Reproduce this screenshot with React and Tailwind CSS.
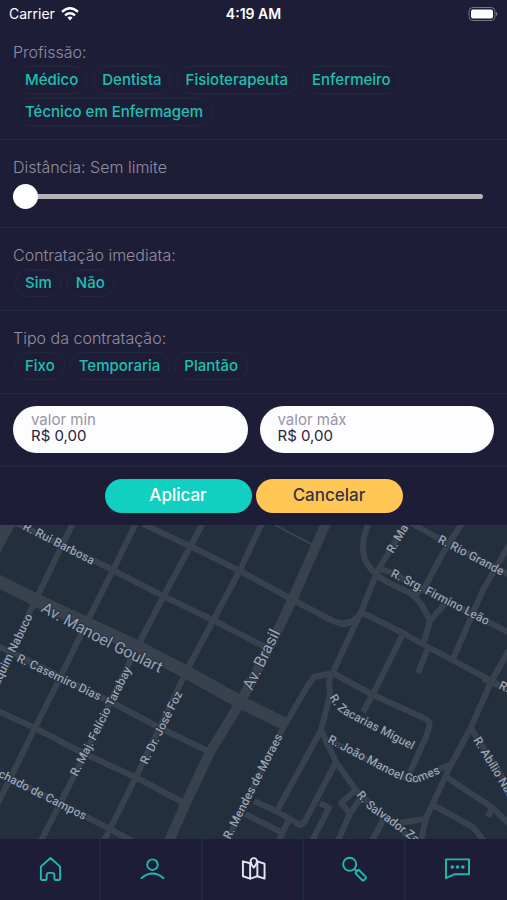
import React, { useState } from 'react';
import clsx from 'clsx';

const PROFESSIONS = ['Médico', 'Dentista', 'Fisioterapeuta', 'Enfermeiro', 'Técnico em Enfermagem'];
const IMMEDIATE = ['Sim', 'Não'];
const CONTRACT_TYPES = ['Fixo', 'Temporaria', 'Plantão'];

const AVENUES = [
  { d: 'M-4 55 L38 76 L140 123 L190 149 L240 177 L285 199', width: 13 },
  { d: 'M326 -2 L293 73 L278 105 L240 178 L210 227 L185 280 L169 316', width: 10 },
];

const STREETS = [
  'M-10 -15 L22 1 L97 37 L163 71 L213 95 L265 122',
  'M143 -1 L192 22 L240 46 L293 75 L333 96 Q343 100 351 96',
  'M73 -2 L38 70 L-4 157',
  'M136 -2 L113 45 L88 95 L58 157 L35 203 L-2 278',
  'M203 -2 L163 72 L132 132 L77 245 L41 316',
  'M262 -2 L240 45 L188 143 L137 250 L104 316',
  'M-2 121 L17 130 L113 178 L160 203 L210 227',
  'M-2 186 L35 203 L83 228 L137 253 L186 279',
  'M-2 247 L83 290 L108 303 L132 316',
  'M369 -2 C362 12 361 28 367 38 C375 54 395 60 410 68 C420 75 424 83 430 96',
  'M408 -4 L378 45 L361 87 L333 147',
  'M340 99 C352 99 357 94 361 87 L403 108 L428 122 L486 153 L510 166',
  'M380 44 L390 47 L486 96 L510 108',
  'M411 -2 L436 12 L504 47 L510 50',
  'M462 -2 L443 28 L425 62 L415 70 M448 75 L430 96 L424 117',
  'M509 20 L483 65 L453 134',
  'M509 125 L491 157 L471 202 L450 242 L426 293 L421 316',
  'M483 154 L500 161',
  'M403 109 L376 163 L363 187',
  'M428 123 L418 148',
  'M333 148 L314 152 L307 162 L283 203 L227 316',
  'M331 148 L329 158 L330 170 L321 205 L278 284',
  'M333 148 L373 170 L426 194 Q431 197 429 202 L426 212 L410 247',
  'M321 205 L336 237 L356 265 L341 278 L350 288 L338 316',
  'M356 265 L361 273 L350 288',
  'M336 237 L304 298 L300 300 L278 287 L254 276',
  'M320 278 L329 283 L312 316',
  'M288 296 L279 316 M245 289 L283 308',
  'M328 215 L403 252 L414 255 L450 240',
  'M357 266 L384 292 L415 316 M383 295 L372 316 M400 298 L424 294',
  'M446 252 L493 283 L510 300 M492 283 L488 292',
  'M433 280 L473 302 L484 316',
  'M470 202 L510 264',
];

const STREET_LABELS = [
  { id: 'rui', text: 'R. Rui Barbosa', d: 'M22 4 L110 49' },
  { id: 'casemiro', text: 'R. Casemiro Dias', d: 'M16 136 L116 184' },
  { id: 'nabuco', text: 'R. Joaquim Nabuco', d: 'M-20 200 L33 91', end: true },
  { id: 'tarabay', text: 'R. Maj. Felício Tarabay', d: 'M77 252 L138 132' },
  { id: 'foz', text: 'R. Dr. José Foz', d: 'M147 240 L190 154' },
  { id: 'campos', text: 'R. Machado de Campos', d: 'M-47 229 L84 295', end: true },
  { id: 'moraes', text: 'R. Mendes de Moraes', d: 'M230 315 L286 205' },
  { id: 'ma', text: 'R. Ma', d: 'M393 29 L415 -8' },
  { id: 'rio', text: 'R. Rio Grande', d: 'M437 17 L519 60' },
  { id: 'firmino', text: 'R. Srg. Firmino Leão', d: 'M390 51 L500 107' },
  { id: 'edge', text: 'R.', d: 'M498 163 L530 179' },
  { id: 'zacarias', text: 'R. Zacarias Miguel', d: 'M329 172 Q336 186 348 192 L430 234' },
  { id: 'gomes', text: 'R. João Manoel Gomes', d: 'M327 217 L388 249 C402 256 412 260 424 255 L460 240' },
  { id: 'abilio', text: 'R. Abílio Nascimento', d: 'M473 215 L540 325' },
  { id: 'salvador', text: 'R. Salvador Zago', d: 'M356 270 Q368 286 380 292 L440 337' },
];

const AVENUE_LABELS = [
  { id: 'goulart', text: 'Av. Manoel Goulart', d: 'M40 86 Q90 114 120 129 L190 163' },
  { id: 'brasil', text: 'Av. Brasil', d: 'M252 166 L290 88' },
];

function StatusBar() {
  return (
    <header className="grid h-[25px] grid-cols-3 items-center px-[9px] pt-[3px] text-sm text-white">
      <div className="flex items-center gap-[6px]">
        Carrier
        <svg className="h-[14px] w-[18px]" viewBox="0 0 18 14" fill="none" stroke="currentColor" strokeWidth="2.4">
          <path d="M1 4.8 Q9 -2.2 17 4.8" />
          <path d="M4 8.3 Q9 4 14 8.3" />
          <path d="M6.4 10.6 Q9 8.4 11.6 10.6 L9 13.4 Z" fill="currentColor" stroke="none" />
        </svg>
      </div>
      <span className="text-center font-semibold">4:19 AM</span>
      <svg className="h-[14px] w-[30px] justify-self-end" viewBox="0 0 30 14">
        <rect x="1" y="0.5" width="26" height="13" rx="4" fill="none" stroke="#77758a" />
        <rect x="3" y="2.5" width="22" height="9" rx="2" fill="#fff" />
        <path d="M28 4.8 Q30.6 7 28 9.2 Z" fill="#77758a" />
      </svg>
    </header>
  );
}

function ChipGroup({ label, options }) {
  const [selected, setSelected] = useState([]);

  const toggle = (option) =>
    setSelected((prev) => (prev.includes(option) ? prev.filter((o) => o !== option) : [...prev, option]));

  return (
    <fieldset className="border-b border-[#1d2c40] px-[13px] pt-[15px] pb-[13px]">
      <legend className="float-left w-full text-base leading-6 font-light text-[#918f9f]">{label}</legend>
      <div className="clear-both flex flex-wrap gap-1 px-[2px] pt-[2px]">
        {options.map((option) => (
          <button
            key={option}
            type="button"
            aria-pressed={selected.includes(option)}
            onClick={() => toggle(option)}
            className={clsx(
              'h-7 rounded-full border border-[#20283d] px-[9px] text-[15px] leading-5 font-medium',
              selected.includes(option) ? 'bg-[#11cfc1] text-white' : 'text-[#1fc0b0]'
            )}
          >
            {option}
          </button>
        ))}
      </div>
    </fieldset>
  );
}

function MoneyField({ id, label }) {
  return (
    <div className="flex h-[47px] min-w-0 flex-1 flex-col justify-center rounded-full bg-[#fdfcfe] px-[18px] pb-[3px]">
      <label htmlFor={id} className="text-[15px] leading-4 text-[#9896a3]">{label}</label>
      <input
        id={id}
        defaultValue="R$ 0,00"
        className="w-full bg-transparent text-[15px] leading-4 text-[#26243f] outline-none"
      />
    </div>
  );
}

function MapLabel({ label, className }) {
  return (
    <text className={className} textAnchor={label.end ? 'end' : 'start'}>
      <textPath href={`#label-${label.id}`} startOffset={label.end ? '100%' : '0'}>
        {label.text}
      </textPath>
    </text>
  );
}

function StreetMap() {
  return (
    <main className="flex flex-1 bg-[#242f3e]">
      <svg className="w-full" viewBox="0 0 507 314" preserveAspectRatio="xMidYMid slice" role="img" aria-label="Mapa">
        <defs>
          {[...STREET_LABELS, ...AVENUE_LABELS].map((label) => (
            <path key={label.id} id={`label-${label.id}`} d={label.d} />
          ))}
        </defs>
        <g fill="none" stroke="#38414e" strokeLinejoin="round">
          {STREETS.map((d) => (
            <path key={d} d={d} strokeWidth="6" />
          ))}
          {AVENUES.map((road) => (
            <path key={road.d} d={road.d} strokeWidth={road.width} />
          ))}
          <path d="M275 0 L313 20" strokeWidth="2" />
          <path d="M0 0 H15 L0 28 Z" fill="#38414e" stroke="none" />
        </g>
        <g fill="#98a3b3" stroke="#242f3e" strokeWidth="2" paintOrder="stroke" fontFamily="Roboto, sans-serif">
          {STREET_LABELS.map((label) => (
            <MapLabel key={label.id} label={label} className="text-xs font-medium" />
          ))}
          {AVENUE_LABELS.map((label) => (
            <MapLabel key={label.id} label={label} className="text-base" />
          ))}
        </g>
      </svg>
    </main>
  );
}

const TABS = [
  {
    name: 'Início',
    icon: <path d="M3 10 L13 1 L23 10 V22 Q23 24 21 24 H18.5 Q17 24 17 22.5 V19 Q17 16.5 14.5 16.5 H11.5 Q9 16.5 9 19 V22.5 Q9 24 7.5 24 H5 Q3 24 3 22 Z" />,
  },
  {
    name: 'Perfil',
    icon: (
      <>
        <circle cx="13" cy="8" r="5.5" />
        <path d="M1.5 22 Q13 12.5 24.5 22" />
      </>
    ),
  },
  {
    name: 'Mapa',
    active: true,
    icon: (
      <>
        <path d="M9.5 6.5 L2 4.5 V20 L9.5 22.5 L17 20 L24.5 22.5 V7 L17 4.5" />
        <path d="M9.5 6.5 V22.5 M17 4.5 V20" />
        <path d="M13.3 11 Q10 7 10 4.5 A3.3 3.3 0 0 1 16.6 4.5 Q16.6 7 13.3 11 Z" fill="#1e1d37" />
      </>
    ),
  },
  {
    name: 'Buscar',
    icon: (
      <>
        <circle cx="8" cy="7.5" r="6.8" />
        <path d="M13 12.5 L15.5 15" />
        <rect x="-2.5" y="-6" width="5" height="12" rx="1.5" transform="translate(19.5 19) rotate(-45)" />
      </>
    ),
  },
  {
    name: 'Mensagens',
    icon: (
      <>
        <path d="M1 2.5 H25 V18 H9.5 L1 22 Z" />
        <path d="M7.5 10.5 h0.1 M13 10.5 h0.1 M18.5 10.5 h0.1" strokeWidth="3.6" />
      </>
    ),
  },
];

function TabBar() {
  return (
    <nav className="grid h-[61px] grid-cols-5 bg-[#1e1d37]">
      {TABS.map((tab) => (
        <a
          key={tab.name}
          href="#"
          aria-label={tab.name}
          className={clsx(
            'flex items-center justify-center border-r-2 border-[#1d2a3e] pl-[2px] last:border-r-0',
            tab.active ? 'text-[#e6e3f1]' : 'text-[#20b9ab]'
          )}
        >
          <svg
            className="size-[25px] overflow-visible"
            viewBox="0 0 26 26"
            fill="none"
            stroke="currentColor"
            strokeWidth="2"
            strokeLinecap="round"
            strokeLinejoin="round"
          >
            {tab.icon}
          </svg>
        </a>
      ))}
    </nav>
  );
}

export default function App() {
  const [distance, setDistance] = useState(0);

  return (
    <div className="flex min-h-screen flex-col bg-[#1e1d37] font-['Inter',sans-serif]">
      <StatusBar />
      <form onSubmit={(e) => e.preventDefault()}>
        <ChipGroup label="Profissão:" options={PROFESSIONS} />

        <div className="border-b border-[#1d2c40] pt-[15px] pr-6 pb-[18px] pl-[13px]">
          <label htmlFor="distance" className="block text-base leading-6 font-light text-[#918f9f]">
            Distância: {distance === 0 ? 'Sem limite' : `${distance} km`}
          </label>
          <input
            id="distance"
            type="range"
            min="0"
            max="100"
            value={distance}
            onChange={(e) => setDistance(Number(e.target.value))}
            className="mt-[5px] block h-[25px] w-full appearance-none bg-transparent [&::-webkit-slider-runnable-track]:h-[5px] [&::-webkit-slider-runnable-track]:rounded-full [&::-webkit-slider-runnable-track]:bg-[#b4b1b7] [&::-webkit-slider-thumb]:-mt-[10px] [&::-webkit-slider-thumb]:size-[25px] [&::-webkit-slider-thumb]:appearance-none [&::-webkit-slider-thumb]:rounded-full [&::-webkit-slider-thumb]:bg-white"
          />
        </div>

        <ChipGroup label="Contratação imediata:" options={IMMEDIATE} />
        <ChipGroup label="Tipo da contratação:" options={CONTRACT_TYPES} />

        <div className="flex gap-3 border-b border-[#26283f] px-[13px] pt-3 pb-[13px]">
          <MoneyField id="min" label="valor min" />
          <MoneyField id="max" label="valor máx" />
        </div>

        <div className="flex justify-center gap-1 py-3">
          <button type="submit" className="h-[34px] w-[147px] rounded-full bg-[#11cfc1] text-[17px] font-medium text-white">
            Aplicar
          </button>
          <button type="button" className="h-[34px] w-[147px] rounded-full bg-[#ffc654] text-[17px] font-medium text-[#35324a]">
            Cancelar
          </button>
        </div>
      </form>
      <StreetMap />
      <TabBar />
    </div>
  );
}
